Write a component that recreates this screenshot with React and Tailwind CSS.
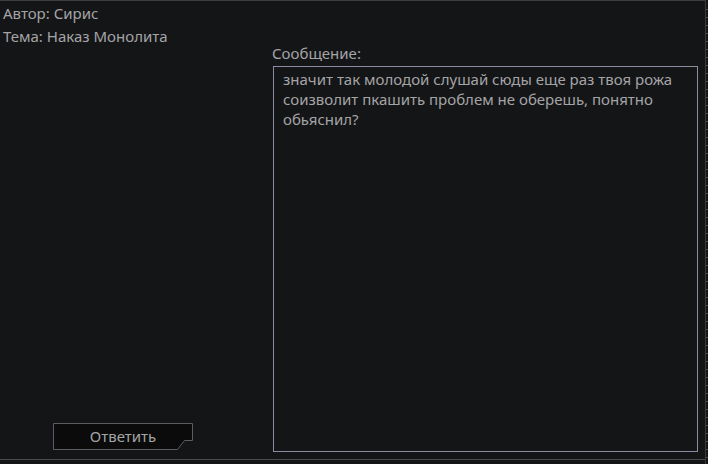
import React from 'react';

const font = { fontFamily: '"Noto Sans", "DejaVu Sans", sans-serif' };

function ReplyButton() {
    return (
        <div className="relative w-[140px] h-[27px]">
            <svg className="absolute inset-0" width="140" height="27" viewBox="0 0 140 27">
                <polygon points="0.5,0.5 139.5,0.5 139.5,17.5 131.5,17.5 124.5,26.5 0.5,26.5" fill="#0a0b0a" stroke="#5c5d62" strokeWidth="1" />
            </svg>
            <span className="relative flex h-full items-center justify-center text-[15px] text-[#a4a4a6]">Ответить</span>
        </div>
    );
}

function Ruler() {
    const ticks = Array.from({ length: 57 });
    return (
        <div className="w-[3px] h-full border-l border-[#3a3b3e] flex flex-col pt-[9px] gap-[7px]">
            {ticks.map((_, i) => (
                <div key={i} className="h-px w-[2px] bg-[#4a4b4f]" />
            ))}
        </div>
    );
}

export default function App() {
    return (
        <div className="w-[708px] h-[464px] bg-[#141517] flex overflow-hidden" style={font}>
            <div className="flex-1 flex flex-col border-t border-[#3c3d40]">
                <div className="flex flex-1 min-h-0">
                    <div className="w-[272px] flex flex-col pl-[3px] pt-[2px] text-[15px] text-[#a4a4a6]">
                        <div className="h-[23px] leading-[20px]">Автор: Сирис</div>
                        <div className="leading-[20px]">Тема: Наказ Монолита</div>
                        <div className="mt-auto mb-[9px] pl-[50px]">
                            <ReplyButton />
                        </div>
                    </div>
                    <div className="flex-1 flex flex-col pt-[42px] pb-[7px] pr-[7px]">
                        <div className="text-[15px] leading-[20px] text-[#a4a4a6] h-[23px]">Сообщение:</div>
                        <div className="flex-1 ml-px border border-[#8b8ca2] bg-[#141517] px-[9px] pt-[2px] text-[15px] leading-[20px] text-[#a4a4a6]">
                            значит так молодой слушай сюды еще раз твоя рожа соизволит пкашить проблем не оберешь, понятно обьяснил?
                        </div>
                    </div>
                </div>
                <div className="h-[5px] border-t border-[#4a4b4f]" />
            </div>
            <Ruler />
        </div>
    );
}
